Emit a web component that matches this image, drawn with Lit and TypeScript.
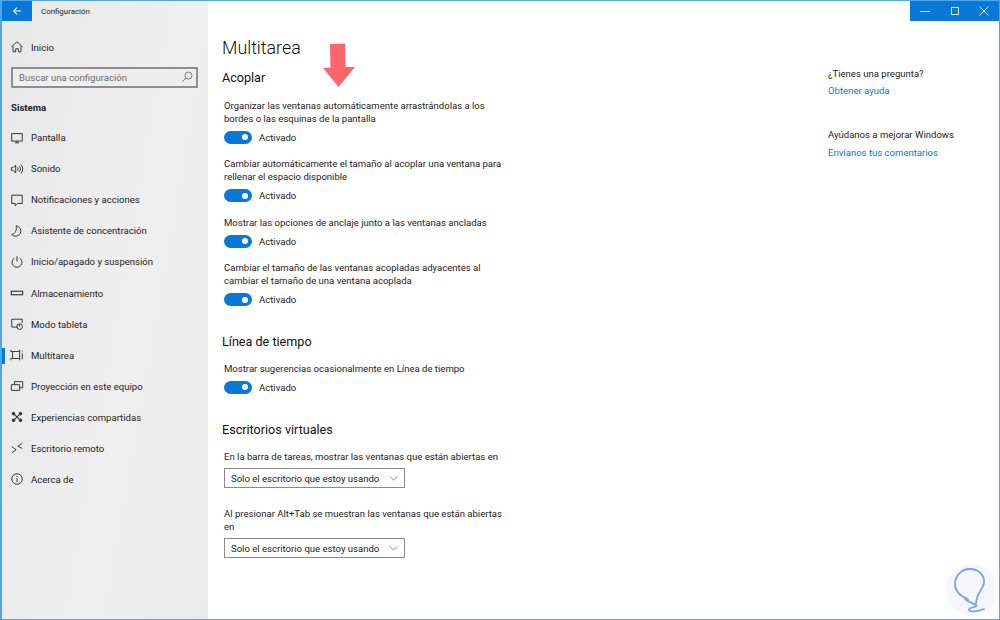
import { LitElement, html, css, svg } from "lit";
import { customElement } from "lit/decorators.js";

const I = (body: unknown) => html`<svg class="ico" viewBox="0 0 16 16" fill="none" stroke="#333" stroke-width="1.1">${body}</svg>`;
const nav = [
  ["Pantalla", svg`<rect x="2" y="3" width="12" height="8.5"/><path d="M5.5 13.5h5M8 11.5v2"/>`],
  ["Sonido", svg`<path d="M1.5 6.5v3h2l3 3v-9l-3 3zM8.5 6a3 3 0 0 1 0 4M10.5 4.5a5 5 0 0 1 0 7M12.5 3a7 7 0 0 1 0 10"/>`],
  ["Notificaciones y acciones", svg`<path d="M2 2.5h12v9.5H8.5L6 14.5V12H2z"/>`],
  ["Asistente de concentración", svg`<path d="M7 2A6 6 0 1 1 2 12C6 11 8 7 7 2z"/>`],
  ["Inicio/apagado y suspensión", svg`<path d="M5 3.5a5.7 5.7 0 1 0 6 0M8 1.5v6"/>`],
  ["Almacenamiento", svg`<rect x="1.5" y="6" width="13" height="4" stroke-width="1.3"/>`],
  ["Modo tableta", svg`<path d="M9 11.5H2v-9h12v4"/><circle cx="11" cy="11" r="3.2"/><path d="M11 8v3"/>`],
  ["Multitarea", svg`<path d="M3 4h8v8H3zM1 2v2h2M11 2v2M1 14v-2h2M11 14v-2M14 3v1M14 6v7"/>`],
  ["Proyección en este equipo", svg`<path d="M5 6V3h9.5v7H11M1.5 6.5H11V13H1.5z"/>`],
  ["Experiencias compartidas", svg`<path d="M5 5l6 6M11 5l-6 6" stroke-width="1.3"/><g fill="#333"><circle cx="4" cy="4.2" r="1.5"/><circle cx="12" cy="4.2" r="1.5"/><circle cx="4" cy="11.8" r="1.5"/><circle cx="12" cy="11.8" r="1.5"/></g>`],
  ["Escritorio remoto", svg`<path d="M2 6.5l5 3.5-5 3.5M14 2.5L9 6l5 2.5"/>`],
  ["Acerca de", svg`<circle cx="8" cy="8" r="6"/><path d="M8 7v4.5M8 4.5v1.3"/>`],
] as [string, unknown][];

@customElement("app-root")
export class AppRoot extends LitElement {
  static styles = css`
    :host { display: block; width: 1000px; height: 620px; overflow: hidden; position: relative;
      font-family: Roboto, "Noto Sans", sans-serif; color: #1c1c1c; }
    * { box-sizing: border-box; }
    .win { display: grid; grid-template-columns: 206px 1fr; height: 620px; background: #fff;
      border: solid #4ea6ea; border-width: 1px 1px 1px 2px; }
    .side { background: linear-gradient(100deg, #e8e8e8, #efefef 60%, #ebebeb); display: flex; flex-direction: column; }
    .tbar { display: flex; align-items: center; height: 20px; font-size: 7.9px; color: #222; }
    .back { width: 30px; height: 20px; background: #0a78d7; display: flex; align-items: center; justify-content: center; margin-right: 9px; }
    .item { display: flex; align-items: center; height: 31.09px; font-size: 9.55px; color: #222; white-space: nowrap; }
    .ico { width: 14px; height: 14px; margin: 0 7px 0 8px; flex: none; }
    .item.home { margin-top: 10.5px; }
    .search { margin: 4px 10px 0 9px; height: 21px; border: 2px solid #8f8f8f; display: flex; align-items: center; justify-content: space-between;
      padding: 0 3px 0 6px; font-size: 9.55px; color: #6d6d6d; background: #eee; }
    .search svg { width: 12px; height: 12px; }
    .sys { font-size: 9.6px; font-weight: 700; margin: 12px 0 0 9px; height: 15px; line-height: 15px; color: #222; }
    .list { margin-top: 7.5px; position: relative; }
    .item.on { position: relative; }
    .item.on::before { content: ""; position: absolute; left: 0; top: 8px; width: 3px; height: 16px; background: #0a78d7; }
    .main { display: flex; flex-direction: column; }
    .ctrls { align-self: flex-end; width: 89px; height: 20px; background: #0a78d7; display: flex; }
    .ctrls span { flex: 1; display: flex; align-items: center; justify-content: center; }
    .ctrls svg { width: 10px; height: 10px; }
    .body { display: flex; padding-left: 14px; }
    .col { width: 300px; display: flex; flex-direction: column; }
    h1 { font-size: 17.8px; font-weight: 300; margin: 15px 0 0; height: 24px; line-height: 24px; color: #111; }
    h2 { font-size: 12.6px; font-weight: 400; margin: 0; height: 18px; line-height: 18px; color: #111; }
    h2.a { margin-top: 9px; }
    h2.b { margin-top: 26.4px; }
    .lab { font-size: 9.55px; line-height: 13px; margin: 0 0 0 2px; color: #222; width: 284px; }
    .sw { display: flex; align-items: center; gap: 7px; font-size: 9.55px; height: 14px; margin: 5.4px 0 0 2px; color: #222; }
    .tog { width: 28px; height: 13px; border-radius: 7px; background: #0a78d7; display: flex; align-items: center; justify-content: flex-end; padding-right: 4px; }
    .tog i { width: 6px; height: 6px; border-radius: 50%; background: #fff; display: block; }
    .sel { width: 181px; height: 20px; margin: 5.5px 0 0 2px; border: 1px solid #8a8a8a; display: flex; align-items: center; justify-content: space-between;
      padding: 0 6px; font-size: 9.55px; color: #222; white-space: nowrap; }
    .sel svg { width: 9px; height: 5px; }
    .aside { margin-left: 306px; padding-top: 46px; font-size: 9.55px; line-height: 13px; color: #222; width: 160px; }
    .aside a { color: #0a78d7; display: block; margin-top: 4px; }
    .aside p { margin: 0; }
    .aside p.g { margin-top: 31px; }
    .aside p.g + a { margin-top: 5px; }
    .arrow { position: absolute; left: 322px; top: 43px; width: 33px; height: 45px; }
    .mark { position: absolute; left: 946px; top: 563px; width: 48px; height: 56px; }
  `;

  sw() { return html`<div class="sw"><span class="tog"><i></i></span>Activado</div>`; }
  sel() { return html`<div class="sel">Solo el escritorio que estoy usando
    <svg viewBox="0 0 10 6" fill="none" stroke="#777"><path d="M.5.5L5 5 9.5.5"/></svg></div>`; }

  render() {
    return html`<div class="win">
      <nav class="side">
        <div class="tbar"><span class="back"><svg width="8" height="8" viewBox="0 0 8 8" fill="none" stroke="#fff" stroke-width="1.1"><path d="M4 .5L.8 4 4 7.5M.8 4H8"/></svg></span>Configuración</div>
        <div class="item home">${I(svg`<path d="M1.5 8L8 2l6.5 6M3.5 7v6.5h3V10h3v3.5h3V7"/>`)}Inicio</div>
        <div class="search">Buscar una configuración
          <svg viewBox="0 0 12 12" fill="none" stroke="#777"><circle cx="7.5" cy="4.5" r="3.5"/><path d="M5 7l-4 4"/></svg></div>
        <div class="sys">Sistema</div>
        <div class="list">
          ${nav.map(([t, p]) => html`<div class="item ${t === "Multitarea" ? "on" : ""}">${I(p)}${t}</div>`)}
        </div>
      </nav>
      <main class="main">
        <div class="ctrls">
          <span><svg viewBox="0 0 10 10" stroke="#cfe6fa"><path d="M0 5.5h10"/></svg></span>
          <span><svg viewBox="0 0 10 10" fill="none" stroke="#cfe6fa"><rect x="1.5" y="1.5" width="7" height="7"/></svg></span>
          <span><svg viewBox="0 0 10 10" stroke="#cfe6fa"><path d="M.5.5l9 9M9.5.5l-9 9"/></svg></span>
        </div>
        <div class="body">
          <div class="col">
            <h1>Multitarea</h1>
            <h2 class="a">Acoplar</h2>
            <p class="lab" style="margin-top:12px">Organizar las ventanas automáticamente arrastrándolas a los bordes o las esquinas de la pantalla</p>${this.sw()}
            <p class="lab" style="margin-top:13px">Cambiar automáticamente el tamaño al acoplar una ventana para rellenar el espacio disponible</p>${this.sw()}
            <p class="lab" style="margin-top:13px">Mostrar las opciones de anclaje junto a las ventanas ancladas</p>${this.sw()}
            <p class="lab" style="margin-top:13px">Cambiar el tamaño de las ventanas acopladas adyacentes al cambiar el tamaño de una ventana acoplada</p>${this.sw()}
            <h2 class="b">Línea de tiempo</h2>
            <p class="lab" style="margin-top:11px">Mostrar sugerencias ocasionalmente en Línea de tiempo</p>${this.sw()}
            <h2 class="b">Escritorios virtuales</h2>
            <p class="lab" style="margin-top:11px">En la barra de tareas, mostrar las ventanas que están abiertas en</p>${this.sel()}
            <p class="lab" style="margin-top:18.5px">Al presionar Alt+Tab se muestran las ventanas que están abiertas en</p>${this.sel()}
          </div>
          <aside class="aside">
            <p>¿Tienes una pregunta?</p><a>Obtener ayuda</a>
            <p class="g">Ayúdanos a mejorar Windows</p><a>Envíanos tus comentarios</a>
          </aside>
        </div>
      </main>
      </div>
      <svg class="arrow" viewBox="0 0 33 45"><path d="M8 1l15-.5.5 23.5h9.5L16.5 44 1 25l7.5-.5z" fill="#fb666c"/></svg>
      <svg class="mark" viewBox="0 0 48 56" fill="none">
        <circle cx="26" cy="27" r="26" fill="#f6f7fb"/>
        <path d="M22 36c-8-3-13-7-13-15 0-9 7-15 15-15 8 0 15 6 14 14-1 6-6 10-7 15-.5 2-1 4-1 5M19 36c3 3 8 4 11 6 3 2-8 2-7 5 1 2 8 2 15-1" stroke="#7ea5dc" stroke-width="1.8" stroke-linecap="round"/>
      </svg>`;
  }
}
